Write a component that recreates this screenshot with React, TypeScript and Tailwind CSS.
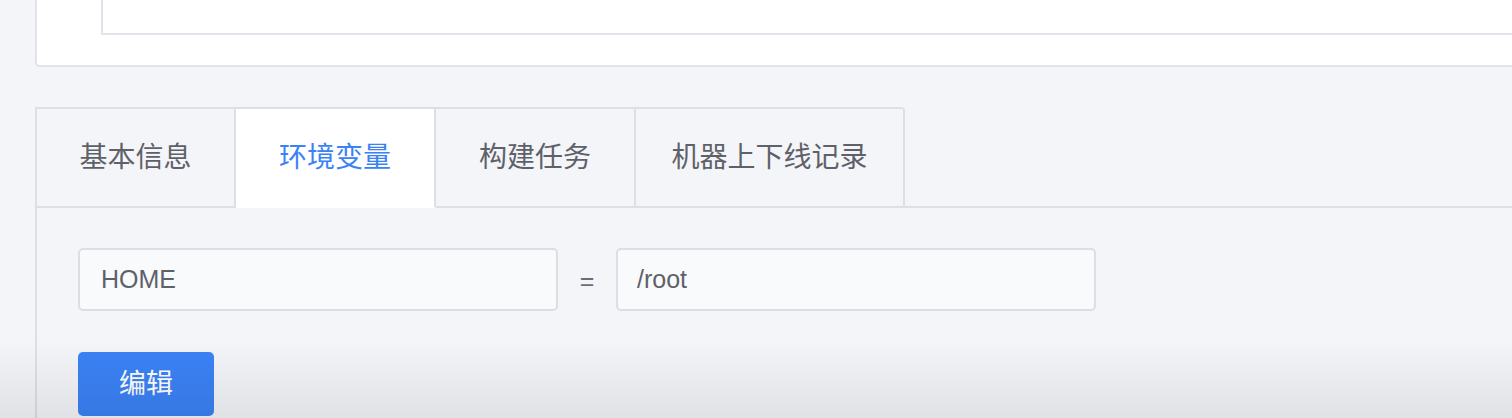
const tabs = [
  { label: "基本信息", w: "w-[199px]" },
  { label: "环境变量", w: "w-[200px]" },
  { label: "构建任务", w: "w-[200px]" },
  { label: "机器上下线记录", w: "w-[269px]" },
];

export default function App() {
  const active = 1;

  return (
    <div className="relative w-full h-[418px] overflow-hidden bg-[#f4f5f9] font-['Liberation_Sans','Noto_Sans_CJK_SC',sans-serif]">
      {/* top card (cut off by the viewport) */}
      <div className="ml-[35px] h-[67px] bg-white border-l-2 border-b-2 border-[#e1e5eb] rounded-bl-[4px]">
        <div className="ml-[64px] h-[35px] border-l-2 border-b-2 border-[#e1e5eb]" />
      </div>

      {/* tab panel */}
      <div className="mt-[40px] ml-[35px] border-l-2 border-[#dcdfe5] h-[400px]">
        <div className="flex border-b-2 border-[#dcdfe5]">
          <div className="flex border-t-2 border-[#dcdfe5] rounded-tr-[4px] -mb-[2px]">
            {tabs.map((t, i) => (
              <div
                key={t.label}
                className={`${t.w} h-[99px] flex items-center justify-center border-r-2 border-[#dcdfe5] text-[28px] ${
                  i === active
                    ? "bg-white text-[#3b82f6] border-b-2 border-b-white"
                    : "bg-[#f4f5f9] text-[#5f6169] border-b-2 border-b-[#dcdfe5]"
                }`}
              >
                {t.label}
              </div>
            ))}
          </div>
        </div>

        <div className="px-[41px] pt-[40px]">
          <div className="flex items-center">
            <div className="w-[480px] h-[63px] flex items-center pl-[21px] bg-[#f9fafc] border-2 border-[#dcdee4] rounded-[5px] text-[25px] text-[#5f6169]">
              HOME
            </div>
            <div className="w-[58px] pt-[4px] text-center text-[25px] text-[#6b6d75]">=</div>
            <div className="w-[480px] h-[63px] flex items-center pl-[19px] bg-[#f9fafc] border-2 border-[#dcdee4] rounded-[5px] text-[25px] text-[#5f6169]">
              /root
            </div>
          </div>

          <button className="mt-[41px] w-[136px] h-[64px] rounded-[5px] bg-[#3b82f6] text-white text-[27px] flex items-center justify-center">
            编辑
          </button>
        </div>
      </div>

      {/* bottom fade */}
      <div className="pointer-events-none absolute inset-x-0 bottom-0 h-[78px] bg-gradient-to-b from-transparent to-black/[0.08]" />
    </div>
  );
}
